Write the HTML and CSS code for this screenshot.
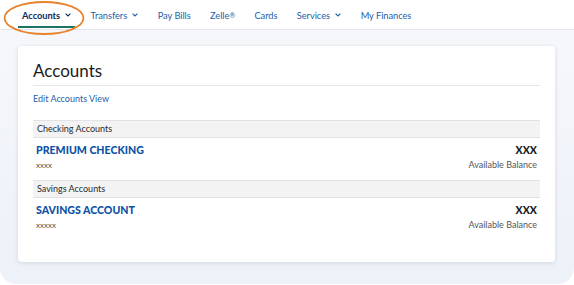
FILE: index.html
```html
<!DOCTYPE html>
<html lang="en">
<head>
<meta charset="utf-8">
<title>Accounts</title>
<link rel="stylesheet" href="styles.css">
</head>
<body>
<nav class="nav">
  <a class="nav-item active">Accounts <svg class="chev" viewBox="0 0 6 4"><path d="M0.6 0.6 L3 3 L5.4 0.6" /></svg></a>
  <a class="nav-item">Transfers <svg class="chev" viewBox="0 0 6 4"><path d="M0.6 0.6 L3 3 L5.4 0.6" /></svg></a>
  <a class="nav-item">Pay Bills</a>
  <a class="nav-item">Zelle<span class="reg">®</span></a>
  <a class="nav-item">Cards</a>
  <a class="nav-item">Services <svg class="chev" viewBox="0 0 6 4"><path d="M0.6 0.6 L3 3 L5.4 0.6" /></svg></a>
  <a class="nav-item">My Finances</a>
  <svg class="highlight" viewBox="0 0 84 36"><ellipse cx="42" cy="18" rx="39.5" ry="16" /></svg>
</nav>
<main class="frame">
  <section class="card">
    <h1 class="title">Accounts</h1>
    <a class="edit-link">Edit Accounts View</a>
    <div class="group-head">Checking Accounts</div>
    <div class="account">
      <div class="acc-left">
        <div class="acc-name">PREMIUM CHECKING</div>
        <div class="acc-num">xxxx</div>
      </div>
      <div class="acc-right">
        <div class="acc-bal">XXX</div>
        <div class="acc-label">Available Balance</div>
      </div>
    </div>
    <div class="group-head">Savings Accounts</div>
    <div class="account">
      <div class="acc-left">
        <div class="acc-name">SAVINGS ACCOUNT</div>
        <div class="acc-num">xxxxx</div>
      </div>
      <div class="acc-right">
        <div class="acc-bal">XXX</div>
        <div class="acc-label">Available Balance</div>
      </div>
    </div>
  </section>
</main>
</body>
</html>
```
FILE: styles.css
```css
html, body {
  margin: 0;
  padding: 0;
  background: #ffffff;
}
body {
  width: 574px;
  height: 285px;
  overflow: hidden;
  font-family: "Lato", "Noto Sans", sans-serif;
}
.nav {
  position: relative;
  height: 30px;
  display: flex;
  align-items: center;
  padding-left: 22px;
  border-bottom: 1px solid #e3e6ea;
  box-sizing: border-box;
}
.nav-item {
  display: flex;
  align-items: center;
  font-size: 9.3px;
  letter-spacing: -0.05px;
  color: #1f5ea8;
  margin-right: 19.3px;
  white-space: pre;
  height: 30px;
  padding-top: 1px;
  box-sizing: border-box;
}
.nav-item.active {
  color: #0c2b5c;
  font-weight: 700;
  position: relative;
}
.nav-item.active::after {
  content: "";
  position: absolute;
  left: -4px;
  right: -4px;
  bottom: 2px;
  height: 2px;
  background: #1d7366;
}
.chev {
  width: 6px;
  height: 4px;
  margin-left: 3px;
  fill: none;
  stroke: currentColor;
  stroke-width: 1.1;
}
.reg {
  font-size: 7px;
}
.highlight {
  position: absolute;
  left: 2px;
  top: 0;
  width: 84px;
  height: 36px;
  fill: none;
  stroke: #e8832b;
  stroke-width: 1.8;
}
.frame {
  display: block;
  height: 254px;
  box-sizing: border-box;
  padding: 16px 19px 21px 18px;
  background: linear-gradient(180deg, #f5f7fb 0%, #edf1f8 100%);
  border-radius: 0 0 16px 16px;
}
.card {
  height: 216px;
  box-sizing: border-box;
  background: #ffffff;
  border-radius: 4px;
  box-shadow: 0 1px 4px rgba(40, 50, 70, 0.14);
  padding: 13px 15px 0 15px;
}
.title {
  margin: 0;
  font-size: 17px;
  line-height: 24px;
  font-weight: 400;
  color: #1a1a1a;
  padding-bottom: 2px;
  border-bottom: 1px solid #e6e6e6;
}
.edit-link {
  display: block;
  margin-top: 6px;
  margin-bottom: 14px;
  font-size: 9px;
  line-height: 14px;
  color: #1f5ea8;
}
.group-head {
  height: 16px;
  line-height: 16px;
  background: #f3f3f3;
  border-top: 1px solid #e2e2e2;
  border-bottom: 1px solid #e2e2e2;
  padding-left: 4px;
  font-size: 9px;
  color: #2a2a2a;
}
.account {
  display: flex;
  justify-content: space-between;
  padding: 5px 3px 8px 3px;
}
.acc-name {
  font-size: 10.6px;
  line-height: 14px;
  font-weight: 900;
  color: #0f52a5;
}
.acc-num {
  font-size: 8px;
  line-height: 14px;
  color: #555555;
  margin-top: 1px;
}
.acc-right {
  text-align: right;
}
.acc-bal {
  font-size: 10.5px;
  line-height: 14px;
  font-weight: 900;
  color: #1a1a1a;
}
.acc-label {
  font-size: 9px;
  line-height: 14px;
  color: #555555;
  margin-top: 1px;
}
```
